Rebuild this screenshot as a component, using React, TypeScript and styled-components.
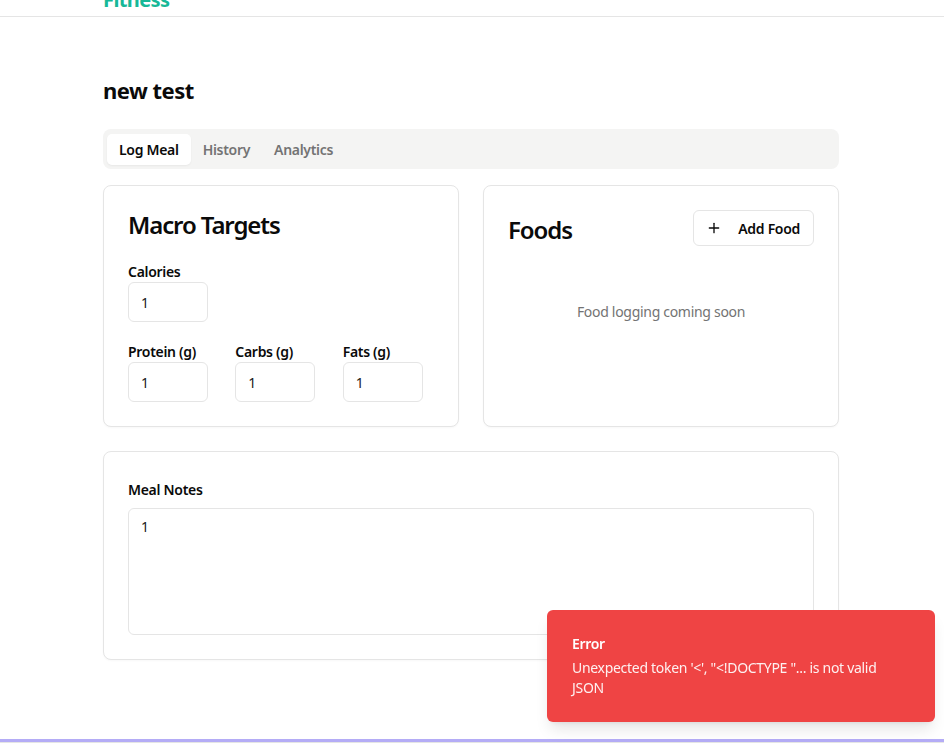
import React from "react";
import styled, { createGlobalStyle } from "styled-components";
import { Plus } from "lucide-react";

const FONT = `"Noto Sans", "Open Sans", Arial, sans-serif`;

const Global = createGlobalStyle`
  html, body { margin: 0; padding: 0; background: #ffffff; }
  body { font-family: ${FONT}; color: #0a0a0a; letter-spacing: -0.3px; }
  * { box-sizing: border-box; }
`;

const Page = styled.div`
  min-height: 100vh;
  display: flex;
  flex-direction: column;
`;

const Header = styled.header`
  height: 17px;
  overflow: hidden;
  border-bottom: 1px solid #e5e5e5;
`;

const HeaderInner = styled.div`
  width: 736px;
  margin: -14px auto 0;
  margin-left: calc(50% - 369px);
`;

const Brand = styled.span`
  font-size: 20px;
  font-weight: 700;
  line-height: 28px;
  color: #17b897;
  letter-spacing: -0.6px;
`;

const Main = styled.main`
  flex: 1;
  width: 736px;
  padding: 57px 0 40px;
  margin-left: calc(50% - 369px);
`;

const Title = styled.h1`
  margin: 0 0 23px;
  font-size: 22px;
  line-height: 32px;
  font-weight: 700;
  letter-spacing: -0.5px;
`;

const TabList = styled.div`
  height: 40px;
  background: #f4f4f3;
  border-radius: 8px;
  padding: 4px;
  display: flex;
  align-items: center;
`;

const Tab = styled.button<{ $active?: boolean }>`
  height: 31px;
  padding: 0 12px;
  border: none;
  border-radius: 5px;
  background: ${(p) => (p.$active ? "#ffffff" : "transparent")};
  box-shadow: ${(p) => (p.$active ? "0 1px 2px rgba(0,0,0,0.05)" : "none")};
  color: ${(p) => (p.$active ? "#0a0a0a" : "#737373")};
  font-family: ${FONT};
  font-size: 14px;
  font-weight: 600;
  letter-spacing: -0.3px;
`;

const Grid = styled.div`
  margin-top: 16px;
  display: grid;
  grid-template-columns: 1fr 1fr;
  gap: 24px;
`;

const Card = styled.section`
  border: 1px solid #e5e5e5;
  border-radius: 8px;
  background: #fff;
  padding: 23px 24px 24px;
  box-shadow: 0 1px 2px rgba(0, 0, 0, 0.03);
`;

const NotesCard = styled(Card)`
  margin-top: 24px;
  padding-top: 24px;
`;

const CardTitle = styled.h2`
  margin: 0;
  font-size: 24px;
  line-height: 32px;
  font-weight: 600;
  letter-spacing: -1.1px;
`;

const Field = styled.div`
  display: flex;
  flex-direction: column;
`;

const Label = styled.label`
  font-size: 14px;
  line-height: 20px;
  font-weight: 600;
`;

const NumberInput = styled.input`
  width: 80px;
  height: 40px;
  border: 1px solid #e5e5e5;
  border-radius: 6px;
  padding: 0 12px;
  font-family: ${FONT};
  font-size: 14px;
  color: #1a1a1a;
  outline: none;
`;

const FirstRow = styled.div`
  margin-top: 21px;
`;

const MacroRow = styled.div`
  margin-top: 20px;
  display: grid;
  grid-template-columns: repeat(3, 1fr);
  gap: 16px;
`;

const FoodsHeader = styled.div`
  display: flex;
  align-items: center;
  justify-content: space-between;
`;

const FoodsTitle = styled(CardTitle)`
  margin-top: 4px;
`;

const OutlineButton = styled.button`
  height: 36px;
  display: flex;
  align-items: center;
  gap: 16px;
  padding: 0 13px 0 12px;
  border: 1px solid #e5e5e5;
  border-radius: 6px;
  background: #fff;
  font-family: ${FONT};
  font-size: 14px;
  font-weight: 600;
  letter-spacing: -0.3px;
  color: #0a0a0a;
  margin-top: 1px;
`;

const Empty = styled.p`
  margin: 56px 0 0;
  text-align: center;
  font-size: 14px;
  line-height: 20px;
  color: #737373;
`;

const NotesLabel = styled(Label)`
  margin-top: 4px;
  margin-bottom: 8px;
`;

const TextArea = styled.textarea`
  width: 100%;
  height: 127px;
  resize: none;
  border: 1px solid #e5e5e5;
  border-radius: 6px;
  padding: 8px 12px;
  font-family: ${FONT};
  font-size: 14px;
  line-height: 20px;
  color: #1a1a1a;
  outline: none;
`;

const Footer = styled.div`
  height: 4px;
  border-top: 3px solid #b4acf6;
  border-bottom: 1px solid #e5e5e5;
`;

const Toast = styled.div`
  position: fixed;
  right: 9px;
  bottom: 21px;
  width: 388px;
  padding: 24px 32px 24px 25px;
  border-radius: 6px;
  background: #ef4444;
  color: #fff;
  box-shadow: 0 10px 15px -3px rgba(0, 0, 0, 0.1), 0 4px 6px -4px rgba(0, 0, 0, 0.1);
  display: grid;
  gap: 4px;
`;

const ToastTitle = styled.div`
  font-size: 14px;
  line-height: 20px;
  font-weight: 600;
`;

const ToastText = styled.div`
  font-size: 14px;
  line-height: 20px;
  opacity: 0.92;
`;

export default function App() {
  return (
    <Page>
      <Global />
      <Header>
        <HeaderInner>
          <Brand>Fitness</Brand>
        </HeaderInner>
      </Header>
      <Main>
        <Title>new test</Title>
        <TabList>
          <Tab $active>Log Meal</Tab>
          <Tab>History</Tab>
          <Tab>Analytics</Tab>
        </TabList>
        <Grid>
          <Card>
            <CardTitle>Macro Targets</CardTitle>
            <FirstRow>
              <Field>
                <Label>Calories</Label>
                <NumberInput defaultValue="1" />
              </Field>
            </FirstRow>
            <MacroRow>
              <Field>
                <Label>Protein (g)</Label>
                <NumberInput defaultValue="1" />
              </Field>
              <Field>
                <Label>Carbs (g)</Label>
                <NumberInput defaultValue="1" />
              </Field>
              <Field>
                <Label>Fats (g)</Label>
                <NumberInput defaultValue="1" />
              </Field>
            </MacroRow>
          </Card>
          <Card>
            <FoodsHeader>
              <FoodsTitle>Foods</FoodsTitle>
              <OutlineButton>
                <Plus size={16} strokeWidth={2} />
                Add Food
              </OutlineButton>
            </FoodsHeader>
            <Empty>Food logging coming soon</Empty>
          </Card>
        </Grid>
        <NotesCard>
          <Field>
            <NotesLabel>Meal Notes</NotesLabel>
            <TextArea defaultValue="1" />
          </Field>
        </NotesCard>
      </Main>
      <Footer />
      <Toast>
        <ToastTitle>Error</ToastTitle>
        <ToastText>Unexpected token '&lt;', "&lt;!DOCTYPE "... is not valid JSON</ToastText>
      </Toast>
    </Page>
  );
}
